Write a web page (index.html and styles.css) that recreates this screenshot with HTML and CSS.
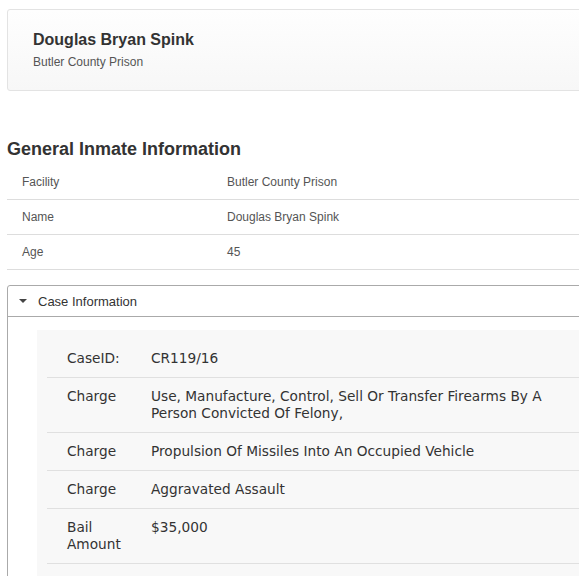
FILE: index.html
```html
<!DOCTYPE html>
<html>
<head>
<meta charset="utf-8">
<link rel="stylesheet" href="styles.css">
</head>
<body>
<div class="page">
  <div class="hero">
    <h1 class="hero-name">Douglas Bryan Spink</h1>
    <div class="hero-sub">Butler County Prison</div>
  </div>

  <h2 class="section-title">General Inmate Information</h2>
  <div class="info-table">
    <div class="info-row"><div class="info-label">Facility</div><div class="info-value">Butler County Prison</div></div>
    <div class="info-row"><div class="info-label">Name</div><div class="info-value">Douglas Bryan Spink</div></div>
    <div class="info-row"><div class="info-label">Age</div><div class="info-value">45</div></div>
  </div>

  <div class="panel">
    <div class="panel-head"><span class="caret"></span>Case Information</div>
    <div class="panel-body">
      <div class="case-box">
        <div class="case-row"><div class="case-label">CaseID:</div><div class="case-value">CR119/16</div></div>
        <div class="case-row"><div class="case-label">Charge</div><div class="case-value">Use, Manufacture, Control, Sell Or Transfer Firearms By A Person Convicted Of Felony,</div></div>
        <div class="case-row"><div class="case-label">Charge</div><div class="case-value">Propulsion Of Missiles Into An Occupied Vehicle</div></div>
        <div class="case-row"><div class="case-label">Charge</div><div class="case-value">Aggravated Assault</div></div>
        <div class="case-row"><div class="case-label">Bail Amount</div><div class="case-value">$35,000</div></div>
      </div>
    </div>
  </div>
</div>
</body>
</html>
```

FILE: styles.css
```css
html, body {
  margin: 0;
  padding: 0;
  overflow: hidden;
  background: #fff;
}
body {
  font-family: "Liberation Sans", Arial, sans-serif;
  color: #333;
}
.page {
  width: 640px;
  padding: 9px 0 0 7px;
}
.hero {
  border: 1px solid #e3e3e3;
  border-radius: 3px;
  background: linear-gradient(#fefefe, #f7f7f7);
  padding: 20px 25px 20px 25px;
  height: 40px;
}
.hero-name {
  margin: 0;
  font-size: 16px;
  font-weight: bold;
  color: #333;
  line-height: 20px;
}
.hero-sub {
  margin-top: 4px;
  font-size: 12px;
  color: #555;
  line-height: 16px;
}
.section-title {
  margin: 47px 0 0 0;
  font-size: 18px;
  font-weight: bold;
  color: #333;
  line-height: 22px;
}
.info-table {
  margin-top: 5px;
}
.info-row {
  display: flex;
  height: 34px;
  align-items: center;
  border-bottom: 1px solid #ddd;
  font-size: 12px;
  color: #555;
}
.info-label {
  width: 205px;
  padding-left: 15px;
}
.panel {
  margin-top: 15px;
  border: 1px solid #aaa;
  border-radius: 3px 3px 0 0;
}
.panel-head {
  height: 30px;
  display: flex;
  align-items: center;
  border-bottom: 1px solid #aaa;
  font-size: 13px;
  color: #333;
  padding-left: 10px;
}
.caret {
  width: 0;
  height: 0;
  border-left: 4px solid transparent;
  border-right: 4px solid transparent;
  border-top: 4px solid #444;
  margin-right: 11px;
  margin-left: 1px;
}
.panel-body {
  padding: 13px 0 14px 29px;
}
.case-box {
  background: #f8f8f8;
  padding: 10px 0 24px 10px;
  font-family: "DejaVu Sans", Verdana, sans-serif;
  font-size: 13.7px;
  color: #333;
}
.case-row {
  display: flex;
  border-bottom: 1px solid #e0e0e0;
  padding: 10px 0 10px 0;
  line-height: 17px;
}
.case-label {
  width: 64px;
  padding: 0 20px;
  flex: none;
}
.case-value {
  width: 420px;
}
```
